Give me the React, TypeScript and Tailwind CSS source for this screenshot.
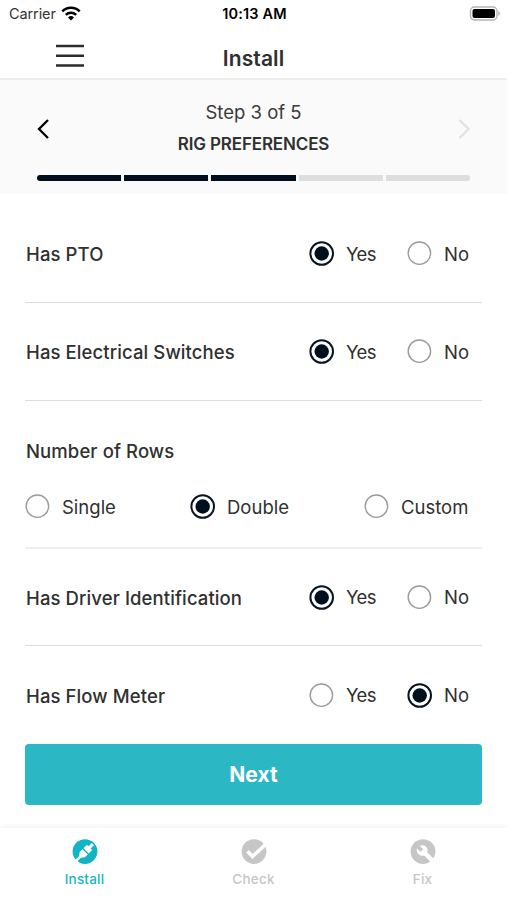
import clsx from "clsx";

const STEPS = [1, 2, 3, 4, 5];
const CURRENT_STEP = 3;

function Radio({ label, checked, className }: { label: string; checked?: boolean; className?: string }) {
  return (
    <div className={clsx("flex items-center", className)}>
      <svg className="h-[25px] w-[25px] shrink-0" viewBox="0 0 25 25" fill="none">
        {checked ? (
          <>
            <circle cx="12.7" cy="12.5" r="11.3" stroke="#071422" strokeWidth="2" />
            <circle cx="12.7" cy="12.5" r="7.2" fill="#000f1e" />
          </>
        ) : (
          <circle cx="12.4" cy="12.2" r="11.2" stroke="#9c9c9c" strokeWidth="1.4" />
        )}
      </svg>
      <span className="ml-3 text-[18.5px] leading-6">{label}</span>
    </div>
  );
}

function YesNoRow({ label, value, className }: { label: string; value: boolean; className?: string }) {
  return (
    <div className={clsx("flex items-center justify-between", className)}>
      <span className="pl-px pt-px text-[18.5px] font-medium leading-6 tracking-[0.1px]">{label}</span>
      <div className="flex">
        <Radio label="Yes" checked={value} className="w-[98px] tracking-[-0.6px]" />
        <Radio label="No" checked={!value} className="w-[75px]" />
      </div>
    </div>
  );
}

function StatusBar() {
  return (
    <div className="grid h-7 grid-cols-3 items-center pl-[9px] pr-[7px] text-black">
      <div className="flex items-center gap-[5px]">
        <span className="text-[14.5px] leading-5 tracking-[-0.1px] text-[#333]">Carrier</span>
        <svg className="mb-0.5 h-[15px] w-5" viewBox="0 0 20 15" fill="none" stroke="#000" strokeWidth="2.5">
          <path d="M1.3 5.4a12.3 12.3 0 0 1 17.4 0" />
          <path d="M4.8 8.9a7.4 7.4 0 0 1 10.4 0" />
          <path d="M10 14.5l-3-3a4.3 4.3 0 0 1 6 0z" fill="#000" stroke="none" />
        </svg>
      </div>
      <span className="text-center text-[14.5px] font-semibold leading-5 tracking-[0.15px]">10:13 AM</span>
      <svg className="mb-0.5 h-[15px] w-[31px] justify-self-end" viewBox="0 0 31 15">
        <rect x="1.5" y="1" width="26.5" height="13" rx="4" fill="#fff" stroke="#b5b5b5" strokeWidth="1.4" />
        <rect x="3.5" y="3" width="22.5" height="9" rx="2" fill="#000" />
        <path d="M29.3 5v5c1-.5 1.5-1.4 1.5-2.5s-.5-2-1.5-2.5z" fill="#b0b0b0" />
      </svg>
    </div>
  );
}

function Header() {
  return (
    <header className="grid h-[52px] grid-cols-3 items-center border-b-2 border-[#eee]">
      <svg className="ml-14 mt-1.5 h-6 w-7" viewBox="0 0 28 24" stroke="#2c2c2e" strokeWidth="2.5">
        <path d="M0 2h28M0 11.7h28M0 21.4h28" />
      </svg>
      <h1 className="pt-3 text-center text-[21px] font-semibold leading-7 tracking-[0.1px]">Install</h1>
    </header>
  );
}

function Stepper() {
  return (
    <section className="h-[114px] bg-[#fafafa] px-[37px] pt-5">
      <div className="flex items-start justify-between">
        <svg className="mt-[18px] h-[22px] w-3" viewBox="0 0 12 22" fill="none" stroke="#000" strokeWidth="2.3">
          <path d="M11 2L2 11l9 9" />
        </svg>
        <div className="text-center">
          <div className="text-[18.5px] leading-6 text-[#3a3a3a]">Step 3 of 5</div>
          <div className="mt-2 text-[17px] font-semibold leading-6 tracking-[-0.15px]">RIG PREFERENCES</div>
        </div>
        <svg className="mt-[18px] h-[22px] w-3" viewBox="0 0 12 22" fill="none" stroke="#e2e2e2" strokeWidth="2.3">
          <path d="M1.5 2l9 9-9 9" />
        </svg>
      </div>
      <div className="mt-[19px] flex gap-[3px]">
        {STEPS.map((step) => (
          <div
            key={step}
            className={clsx(
              "h-1.5 flex-1 first:rounded-l-full last:rounded-r-full",
              step <= CURRENT_STEP ? "bg-[#000f1e]" : "bg-[#dedede]"
            )}
          />
        ))}
      </div>
    </section>
  );
}

function TabBar() {
  return (
    <nav className="grid h-[72px] grid-cols-3 bg-white pt-[11px] text-[13.5px] font-medium leading-5 tracking-[0.2px] text-[#c6c6c6] shadow-[0_-2px_4px_rgba(0,0,0,0.05)]">
      <div className="flex flex-col items-center text-[#18b5c4]">
        <svg className="h-[26px] w-[26px]" viewBox="0 0 26 26">
          <circle cx="13" cy="12.6" r="12.4" fill="#10b4c4" />
          <g fill="#fff" transform="rotate(45 13 13)">
            <path d="M11.5 1.8h3v4.7h2.2v5H9.3v-5h2.2z" />
            <path d="M9.3 12.8h7.4v4L14.3 20v6h-2.6v-6l-2.4-3.2z" />
          </g>
        </svg>
        <span className="mt-1">Install</span>
      </div>
      <div className="flex flex-col items-center">
        <svg className="h-[26px] w-[26px]" viewBox="0 0 26 26" fill="none">
          <circle cx="13" cy="12.6" r="12.4" fill="#c6c6c6" />
          <path d="M6.5 12.2l5 5.3L25 5" stroke="#fff" strokeWidth="3.6" />
        </svg>
        <span className="mt-1">Check</span>
      </div>
      <div className="flex flex-col items-center">
        <svg className="h-[26px] w-[26px]" viewBox="0 0 26 26">
          <circle cx="13" cy="12.6" r="12.4" fill="#c6c6c6" />
          <path
            d="M7 9.5l3.500 3.300 2.600-2.600-3.400-3.400c3-1.300 6.300-.3 7.400 2.500.6 1.400.5 2.700.1 3.900L25 21l-3.300 3.300-7.500-7.800c-1.300.5-2.800.5-4.200-.2-2.700-1.300-3.900-4-3-6.800z"
            fill="#fff"
          />
        </svg>
        <span className="mt-1">Fix</span>
      </div>
    </nav>
  );
}

export default function App() {
  return (
    <div className="flex h-[900px] w-[507px] flex-col overflow-hidden bg-white font-['Inter',sans-serif] text-[#303030]">
      <StatusBar />
      <Header />
      <Stepper />
      <main className="flex-1 px-[25px] pt-[11px]">
        <YesNoRow label="Has PTO" value className="h-[98px] border-b border-[#dedede]" />
        <YesNoRow label="Has Electrical Switches" value className="h-[98px] border-b border-[#dedede]" />
        <div className="h-[148px] border-b-2 border-[#f0f0f0] pt-[38px]">
          <div className="pl-px text-[18.5px] font-medium leading-6 tracking-[0.1px]">Number of Rows</div>
          <div className="mt-[31px] grid grid-cols-[165px_174px_1fr]">
            <Radio label="Single" />
            <Radio label="Double" checked />
            <Radio label="Custom" />
          </div>
        </div>
        <YesNoRow label="Has Driver Identification" value className="h-[97px] border-b border-[#dedede]" />
        <YesNoRow label="Has Flow Meter" value={false} className="h-[98px]" />
        <button className="h-[61px] w-full rounded bg-[#2bb7c4] text-[21px] font-bold text-white">Next</button>
      </main>
      <TabBar />
    </div>
  );
}
